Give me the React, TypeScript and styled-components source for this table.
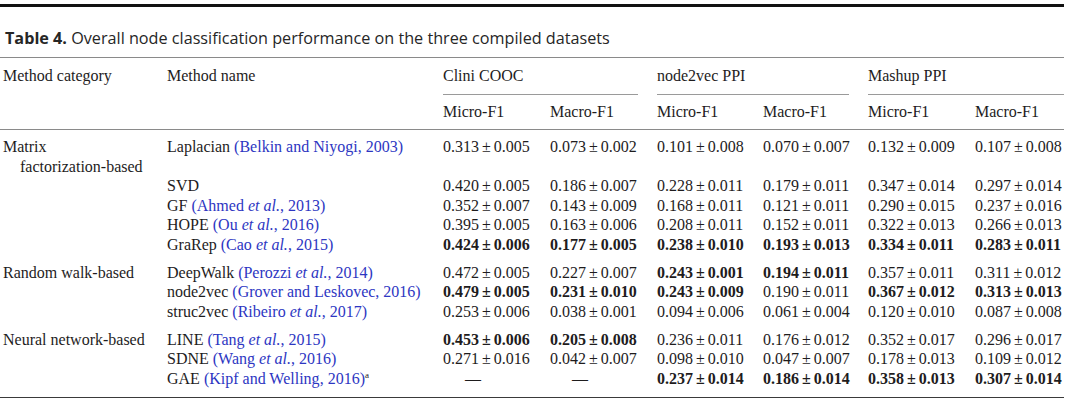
import React from "react";
import { styled, createGlobalStyle } from "styled-components";

const GlobalStyle = createGlobalStyle`
  body {
    margin: 0;
    background: #fff;
  }
`;

type Cite = { author: string; etAl?: boolean; year: string };
type Method = {
  name: string;
  cite?: Cite;
  note?: string;
  vals: (string | null)[];
};
type Group = { category: string[]; methods: Method[] };

// "*" in front of a value means the value is printed bold
const groups: Group[] = [
  {
    category: ["Matrix", "factorization-based"],
    methods: [
      {
        name: "Laplacian",
        cite: { author: "Belkin and Niyogi", year: "2003" },
        vals: ["0.313±0.005", "0.073±0.002", "0.101±0.008", "0.070±0.007", "0.132±0.009", "0.107±0.008"],
      },
      {
        name: "SVD",
        vals: ["0.420±0.005", "0.186±0.007", "0.228±0.011", "0.179±0.011", "0.347±0.014", "0.297±0.014"],
      },
      {
        name: "GF",
        cite: { author: "Ahmed", etAl: true, year: "2013" },
        vals: ["0.352±0.007", "0.143±0.009", "0.168±0.011", "0.121±0.011", "0.290±0.015", "0.237±0.016"],
      },
      {
        name: "HOPE",
        cite: { author: "Ou", etAl: true, year: "2016" },
        vals: ["0.395±0.005", "0.163±0.006", "0.208±0.011", "0.152±0.011", "0.322±0.013", "0.266±0.013"],
      },
      {
        name: "GraRep",
        cite: { author: "Cao", etAl: true, year: "2015" },
        vals: ["*0.424±0.006", "*0.177±0.005", "*0.238±0.010", "*0.193±0.013", "*0.334±0.011", "*0.283±0.011"],
      },
    ],
  },
  {
    category: ["Random walk-based"],
    methods: [
      {
        name: "DeepWalk",
        cite: { author: "Perozzi", etAl: true, year: "2014" },
        vals: ["0.472±0.005", "0.227±0.007", "*0.243±0.001", "*0.194±0.011", "0.357±0.011", "0.311±0.012"],
      },
      {
        name: "node2vec",
        cite: { author: "Grover and Leskovec", year: "2016" },
        vals: ["*0.479±0.005", "*0.231±0.010", "*0.243±0.009", "0.190±0.011", "*0.367±0.012", "*0.313±0.013"],
      },
      {
        name: "struc2vec",
        cite: { author: "Ribeiro", etAl: true, year: "2017" },
        vals: ["0.253±0.006", "0.038±0.001", "0.094±0.006", "0.061±0.004", "0.120±0.010", "0.087±0.008"],
      },
    ],
  },
  {
    category: ["Neural network-based"],
    methods: [
      {
        name: "LINE",
        cite: { author: "Tang", etAl: true, year: "2015" },
        vals: ["*0.453±0.006", "*0.205±0.008", "0.236±0.011", "0.176±0.012", "0.352±0.017", "0.296±0.017"],
      },
      {
        name: "SDNE",
        cite: { author: "Wang", etAl: true, year: "2016" },
        vals: ["0.271±0.016", "0.042±0.007", "0.098±0.010", "0.047±0.007", "0.178±0.013", "0.109±0.012"],
      },
      {
        name: "GAE",
        cite: { author: "Kipf and Welling", year: "2016" },
        note: "a",
        vals: [null, null, "*0.237±0.014", "*0.186±0.014", "*0.358±0.013", "*0.307±0.014"],
      },
    ],
  },
];

const datasets = ["Clini COOC", "node2vec PPI", "Mashup PPI"];
const colWidths = [167, 276, 107, 107, 106, 105, 107, 89];

const Value = ({ v }: { v: string | null }) => {
  if (v === null) return <Dash>—</Dash>;
  const bold = v.startsWith("*");
  const [mean, sd] = v.replace("*", "").split("±");
  return (
    <Num $bold={bold}>
      {mean}
      <PlusMinus>±</PlusMinus>
      {sd}
    </Num>
  );
};

const Citation = ({ cite }: { cite: Cite }) => (
  <Link>
    ({cite.author}
    {cite.etAl && (
      <>
        {" "}
        <i>et al.</i>
      </>
    )}
    , {cite.year})
  </Link>
);

const App = () => {
  return (
    <Page>
      <GlobalStyle />
      <TopRule />
      <Caption>
        <CaptionLabel>Table 4.</CaptionLabel> Overall node classification
        performance on the three compiled datasets
      </Caption>
      <DataTable>
        <colgroup>
          {colWidths.map((w, i) => (
            <col key={i} style={{ width: w }} />
          ))}
        </colgroup>
        <THead>
          <tr>
            <HeadCell rowSpan={2} $first>
              Method category
            </HeadCell>
            <HeadCell rowSpan={2}>Method name</HeadCell>
            {datasets.map((d, i) => (
              <GroupHead key={d} colSpan={2} $last={i === datasets.length - 1}>
                <GroupLabel>{d}</GroupLabel>
              </GroupHead>
            ))}
          </tr>
          <tr>
            {datasets.map((d) => (
              <React.Fragment key={d}>
                <SubHead>Micro-F1</SubHead>
                <SubHead>Macro-F1</SubHead>
              </React.Fragment>
            ))}
          </tr>
        </THead>
        <TBody>
          {groups.map((g, gi) =>
            g.methods.map((m, mi) => {
              const pad = mi === 0 ? (gi === 0 ? 7 : 8.5) : 0;
              const end =
                gi === groups.length - 1 && mi === g.methods.length - 1;
              return (
                <tr key={m.name}>
                  <CategoryCell $pad={pad} $end={end}>
                    {mi === 0 &&
                      g.category.map((c, ci) => (
                        <CategoryLine key={c} $indent={ci > 0}>
                          {c}
                        </CategoryLine>
                      ))}
                  </CategoryCell>
                  <Cell $pad={pad} $end={end}>
                    {m.name}
                    {m.cite && (
                      <>
                        {" "}
                        <Citation cite={m.cite} />
                      </>
                    )}
                    {m.note && <Note>{m.note}</Note>}
                  </Cell>
                  {m.vals.map((v, vi) => (
                    <Cell key={vi} $pad={pad} $end={end}>
                      <Value v={v} />
                    </Cell>
                  ))}
                </tr>
              );
            })
          )}
        </TBody>
      </DataTable>
    </Page>
  );
};
export default App;

const Page = styled.div`
  width: 1080px;
  height: 409px;
  overflow: hidden;
  background: #fff;
  color: #1e1c1d;
  font-family: "Liberation Serif", "Times New Roman", serif;
`;

const TopRule = styled.div`
  width: 1064px;
  height: 3px;
  margin-top: 4px;
  background: #111;
`;

const Caption = styled.div`
  margin: 22px 0 10px;
  padding-left: 5px;
  font-family: "Open Sans", "Liberation Sans", sans-serif;
  font-size: 16.2px;
  line-height: 18px;
  color: #262626;
`;

const CaptionLabel = styled.b`
  font-weight: 700;
`;

const DataTable = styled.table`
  width: 1064px;
  table-layout: fixed;
  border-collapse: collapse;
  border-top: 1px solid #8a8a8a;
  font-size: 16px;
`;

const THead = styled.thead`
  border-bottom: 1px solid #8a8a8a;
`;

const TBody = styled.tbody`
  border-bottom: 1.5px solid #3a3a3a;
`;

const HeadCell = styled.th<{ $first?: boolean }>`
  padding: 8px 0 0 ${(p) => (p.$first ? 3 : 0)}px;
  vertical-align: top;
  text-align: left;
  font-weight: 400;
  line-height: 19px;
  white-space: nowrap;
`;

const GroupHead = styled.th<{ $last?: boolean }>`
  padding: 0 ${(p) => (p.$last ? 0 : 19)}px 0 0;
  text-align: left;
  font-weight: 400;
`;

const GroupLabel = styled.div`
  padding: 8px 0 9px;
  line-height: 19px;
  border-bottom: 1px solid #9a9a9a;
`;

const SubHead = styled.th`
  padding: 7px 0 8px;
  text-align: left;
  font-weight: 400;
  line-height: 19px;
`;

const Cell = styled.td<{ $pad: number; $end?: boolean }>`
  padding: ${(p) => p.$pad}px 0 ${(p) => (p.$end ? 8.5 : 0)}px;
  vertical-align: top;
  line-height: 19.5px;
  white-space: nowrap;
`;

const CategoryCell = styled(Cell)`
  padding-left: 3px;
`;

const CategoryLine = styled.div<{ $indent?: boolean }>`
  padding-left: ${(p) => (p.$indent ? 17 : 0)}px;
`;

const Link = styled.span`
  color: #2d36c2;
`;

const Note = styled.sup`
  font-size: 9px;
  line-height: 0;
  vertical-align: 6px;
`;

const Num = styled.span<{ $bold: boolean }>`
  font-weight: ${(p) => (p.$bold ? 700 : 400)};
`;

const PlusMinus = styled.span`
  margin: 0 3px;
`;

const Dash = styled.span`
  padding-left: 22px;
`;
